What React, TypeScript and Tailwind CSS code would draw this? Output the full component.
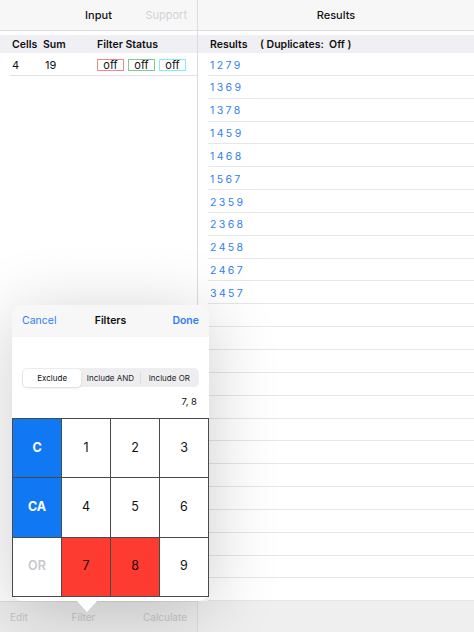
import React from 'react';

const results = ['1279', '1369', '1378', '1459', '1468', '1567', '2359', '2368', '2458', '2467', '3457'];

type Cell = { label: string; kind: 'action' | 'num' | 'sel' | 'off' };

const cells: Cell[] = [
  { label: 'C', kind: 'action' },
  { label: '1', kind: 'num' },
  { label: '2', kind: 'num' },
  { label: '3', kind: 'num' },
  { label: 'CA', kind: 'action' },
  { label: '4', kind: 'num' },
  { label: '5', kind: 'num' },
  { label: '6', kind: 'num' },
  { label: 'OR', kind: 'off' },
  { label: '7', kind: 'sel' },
  { label: '8', kind: 'sel' },
  { label: '9', kind: 'num' },
];

function cellClass(kind: Cell['kind']) {
  if (kind === 'action') return 'bg-[#0f78f2] text-white font-bold';
  if (kind === 'sel') return 'bg-[#fe3b30] text-[#2a0806]';
  if (kind === 'off') return 'bg-white text-[#c8c8cc] font-semibold';
  return 'bg-white text-[#111]';
}

export default function App() {
  const rows = Array.from({ length: 24 }, (_, i) => results[i] ?? '');

  return (
    <div className="relative w-[474px] h-[632px] overflow-hidden bg-white font-['Inter',sans-serif] text-[#111]">
      <div className="flex h-full">
        {/* Input column */}
        <div className="w-[198px] flex flex-col border-r border-[#dcdcdf]">
          <div className="h-[31px] flex items-center relative bg-[#f7f7f7] border-b border-[#dedee2]">
            <span className="w-full text-center text-[11px] font-medium">Input</span>
            <span className="absolute right-[10px] text-[11px] text-[#d2d2d6]">Support</span>
          </div>
          <div className="h-[4px]" />
          <div className="h-[18px] flex items-center bg-[#f0f0f4] text-[10.5px] font-semibold pt-[2px]">
            <span className="w-[31px] pl-[12px] box-content">Cells</span>
            <span className="w-[54px]">Sum</span>
            <span>Filter Status</span>
          </div>
          <div className="h-[23px] flex items-center border-b border-[#e3e3e7] text-[11px] ml-[10px] pt-[2px]">
            <span className="w-[33px] pl-[2px] box-content">4</span>
            <span className="w-[52px]">19</span>
            <div className="flex gap-[4px]">
              <span className="w-[27px] h-[12px] border border-[#ef8a8a] flex items-center justify-center leading-none">off</span>
              <span className="w-[27px] h-[12px] border border-[#82c98f] flex items-center justify-center leading-none">off</span>
              <span className="w-[27px] h-[12px] border border-[#86eef0] flex items-center justify-center leading-none">off</span>
            </div>
          </div>
          <div className="flex-1" />
          <div className="h-[31px] flex items-center justify-between px-[10px] bg-[#ececed] border-t border-[#dcdcdf] text-[10px] text-[#c6c6c9]">
            <span>Edit</span>
            <span className="pr-[4px]">Filter</span>
            <span>Calculate</span>
          </div>
        </div>

        {/* Results column */}
        <div className="flex-1 flex flex-col">
          <div className="h-[31px] flex items-center justify-center bg-[#f7f7f7] border-b border-[#dedee2] text-[11px] font-medium">
            Results
          </div>
          <div className="h-[4px]" />
          <div className="h-[18px] flex items-center bg-[#f0f0f4] pl-[12px] pt-[2px] text-[10.5px] font-semibold">
            <span className="w-[50px]">Results</span>
            <span>( Duplicates:&nbsp; Off )</span>
          </div>
          <div className="flex-1 overflow-hidden">
            {rows.map((r, i) => (
              <div key={i} className="h-[22.85px] ml-[10px] flex items-center pt-[3px] border-b border-[#e6e6ea]">
                <span className="text-[10.5px] tracking-[2.4px] text-[#2f7ff2] pl-[2px]">{r}</span>
              </div>
            ))}
          </div>
          <div className="h-[31px] bg-[#efeff0]" />
        </div>
      </div>

      {/* Filters popover */}
      <div className="absolute left-[12px] top-[305px] w-[197px] h-[296px] rounded-[10px] bg-white shadow-[0_10px_70px_rgba(0,0,0,0.2)]">
        <div className="relative h-[32px] flex items-center justify-between px-[10px] bg-[#f7f7f7] rounded-t-[10px] text-[10.5px]">
          <span className="text-[#2f7ff2]">Cancel</span>
          <span className="absolute inset-0 flex items-center justify-center font-semibold">Filters</span>
          <span className="text-[#2f7ff2] font-semibold">Done</span>
        </div>
        <div className="h-[31px]" />
        <div className="mx-[10px] h-[19px] rounded-[5px] bg-[#eeeef0] p-[1px] grid grid-cols-3 text-[8px]">
          <div className="rounded-[4px] bg-white shadow-[0_1px_2px_rgba(0,0,0,0.15)] flex items-center justify-center">Exclude</div>
          <div className="flex items-center justify-center text-[#222]">Include AND</div>
          <div className="flex items-center justify-center text-[#222] border-l border-[#dcdce0] my-[3px]">Include OR</div>
        </div>
        <div className="h-[31px] flex items-center justify-end pr-[12px] text-[9.5px]">7, 8</div>
        <div className="grid grid-cols-4 border border-[#4a4a4a] bg-[#4a4a4a] gap-px">
          {cells.map((c) => (
            <div key={c.label} className={`h-[58.3px] flex items-center justify-center text-[12.5px] ${cellClass(c.kind)}`}>
              {c.label}
            </div>
          ))}
        </div>
        <svg className="absolute left-[52px] top-[295px]" width="46" height="14" viewBox="0 0 46 14">
          <path d="M12 0 L23 12 L34 0 Z" fill="white" />
        </svg>
      </div>
    </div>
  );
}
